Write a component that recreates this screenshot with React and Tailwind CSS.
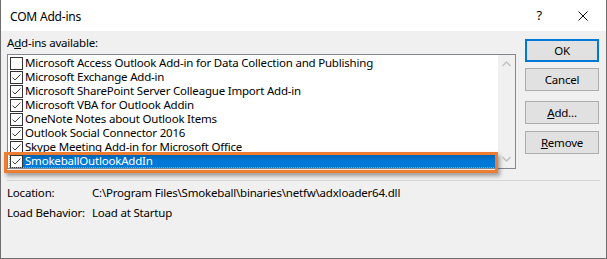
import React from 'react';

const items = [
  { name: 'Microsoft Access Outlook Add-in for Data Collection and Publishing', checked: false },
  { name: 'Microsoft Exchange Add-in', checked: true },
  { name: 'Microsoft SharePoint Server Colleague Import Add-in', checked: true },
  { name: 'Microsoft VBA for Outlook Addin', checked: true },
  { name: 'OneNote Notes about Outlook Items', checked: true },
  { name: 'Outlook Social Connector 2016', checked: true },
  { name: 'Skype Meeting Add-in for Microsoft Office', checked: true },
  { name: 'SmokeballOutlookAddIn', checked: true, selected: true },
];

const CheckBox = ({ checked }) => (
  <div className="w-[13px] h-[13px] shrink-0 border border-[#333] bg-white flex items-center justify-center">
    {checked && (
      <svg width="11" height="11" viewBox="0 0 11 11">
        <path d="M1.5 5.5 L4 8 L9.5 2.5" fill="none" stroke="#444" strokeWidth="1" />
      </svg>
    )}
  </div>
);

const Button = ({ children, primary }) => (
  <div
    className={`w-[74px] h-[23px] flex items-center justify-center bg-[#e1e1e1] text-black ${
      primary ? 'border-2 border-[#0078d7]' : 'border border-[#adadad]'
    }`}
  >
    {children}
  </div>
);

const Row = ({ item }) => (
  <div className="h-[14px] flex items-center pl-[2px] relative">
    <CheckBox checked={item.checked} />
    <div
      className={`h-[14px] flex items-center pl-[2px] pr-[2px] leading-[14px] flex-1 ${
        item.selected ? 'bg-gradient-to-b from-[#0062b0] via-[#0078d7] to-[#0078d7] text-white' : ''
      }`}
    >
      <span className="whitespace-nowrap">{item.name}</span>
    </div>
    {item.selected && (
      <div className="absolute left-[1px] right-0 top-0 bottom-0 border border-dotted border-[#c8a060] pointer-events-none" />
    )}
  </div>
);

const App = () => {
  return (
    <div
      className="w-[607px] h-[259px] bg-[#f0f0f0] border-x border-b border-[#6e6e6e] relative flex flex-col text-[11.5px] tracking-[-0.2px] text-black"
      style={{ fontFamily: '"Noto Sans", "Liberation Sans", sans-serif' }}
    >
      <div className="h-[31px] bg-white flex items-center pl-[9px] pr-[18px] pt-[3px] shrink-0">
        <span className="text-[12px] flex-1">COM Add-ins</span>
        <span className="text-[13px] mr-[36px] -mt-[3px]">?</span>
        <svg width="10" height="10" viewBox="0 0 10 10" className="-mt-[3px]">
          <path d="M0.5 0.5 L9.5 9.5 M9.5 0.5 L0.5 9.5" stroke="#111" strokeWidth="1" />
        </svg>
      </div>

      <div className="flex pl-[6px] pr-[7px] pt-[4px]">
        <div className="flex flex-col w-[509px]">
          <div className="h-[16px] leading-[16px]">
            A<span className="underline">d</span>d-ins available:
          </div>
          <div className="mt-[3px] h-[115px] border border-[#828790] bg-white flex">
            <div className="flex-1 pt-[1px] overflow-hidden">
              {items.map((item) => (
                <Row key={item.name} item={item} />
              ))}
            </div>
            <div className="w-[17px] bg-[#f0f0f0] flex flex-col items-center justify-between py-[6px]">
              <svg width="9" height="6" viewBox="0 0 9 6">
                <path d="M0.5 5 L4.5 1 L8.5 5" fill="none" stroke="#c0c0c0" strokeWidth="1.3" />
              </svg>
              <svg width="9" height="6" viewBox="0 0 9 6">
                <path d="M0.5 1 L4.5 5 L8.5 1" fill="none" stroke="#c0c0c0" strokeWidth="1.3" />
              </svg>
            </div>
          </div>
        </div>
        <div className="flex flex-col ml-[9px] pt-[4px]">
          <Button primary>OK</Button>
          <div className="mt-[6px]">
            <Button>Cancel</Button>
          </div>
          <div className="mt-[10px]">
            <Button>
              <span className="underline">A</span>dd...
            </Button>
          </div>
          <div className="mt-[7px]">
            <Button>
              <span className="underline">R</span>emove
            </Button>
          </div>
        </div>
      </div>

      <div className="mx-[6px] mt-[11px] h-[1px] bg-[#d5d5d5] w-[593px]" />

      <div className="pl-[6px] pt-[4px] flex flex-col gap-[4px]">
        <div className="flex h-[16px] items-center">
          <span className="w-[85px]">Location:</span>
          <span>C:\Program Files\Smokeball\binaries\netfw\adxloader64.dll</span>
        </div>
        <div className="flex h-[16px] items-center">
          <span className="w-[85px]">Load Behavior:</span>
          <span>Load at Startup</span>
        </div>
      </div>

      <div className="absolute left-[3px] top-[152px] w-[494px] h-[21px] border-[3px] border-[#ed7d31] shadow-[2px_3px_4px_rgba(0,0,0,0.35)] pointer-events-none" />
    </div>
  );
};

export default App;
